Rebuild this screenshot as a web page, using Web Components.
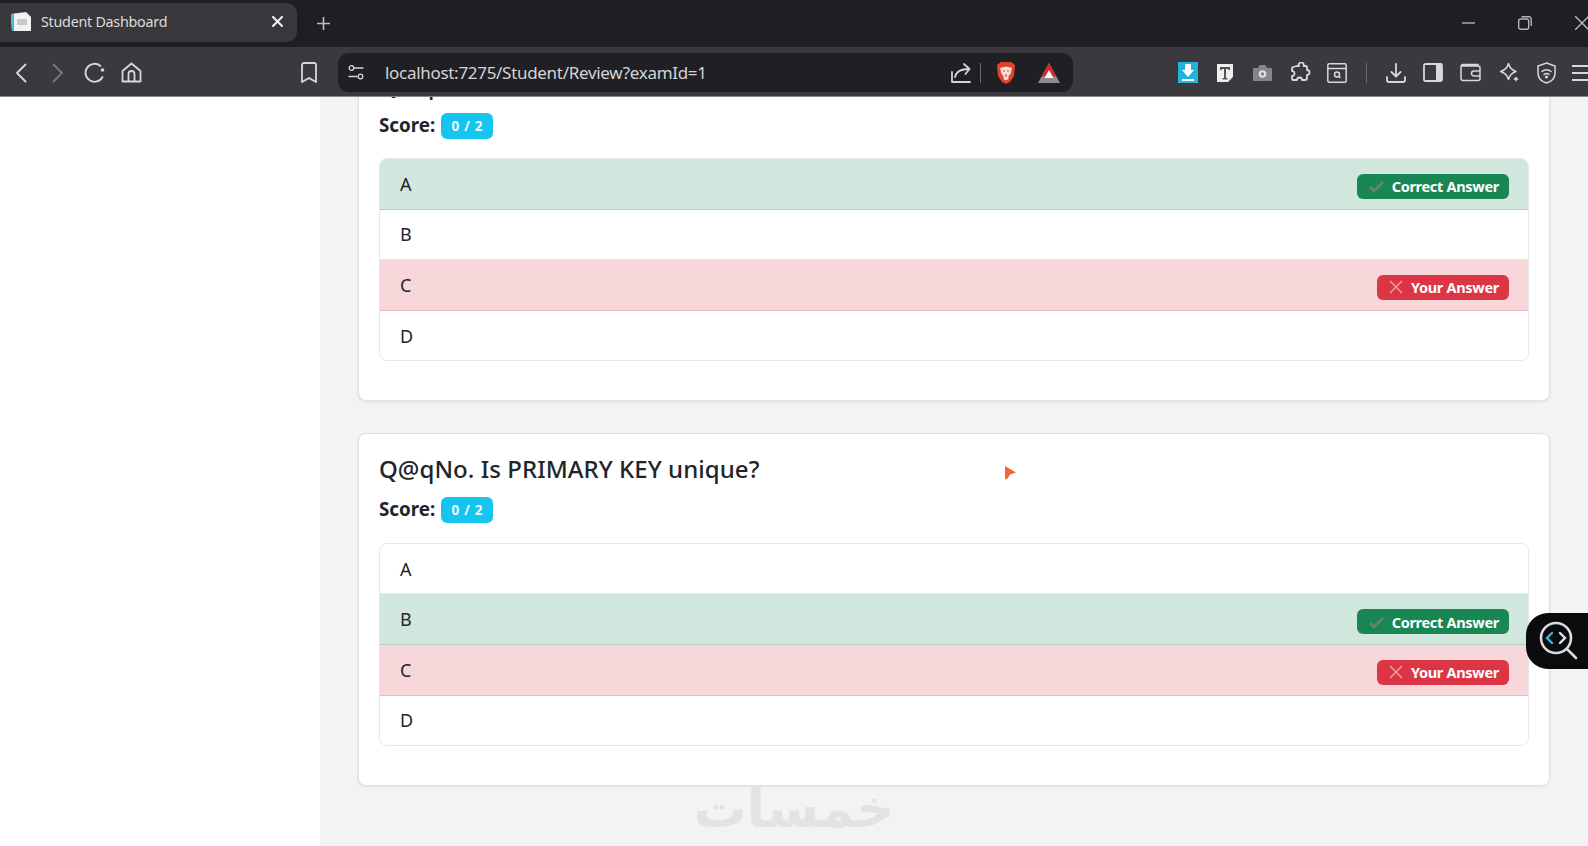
<!DOCTYPE html>
<html lang="en">
<head>
<meta charset="utf-8">
<title>Student Dashboard</title>
<style>
  html, body { margin: 0; height: 100%; overflow: hidden; background: #fff; }
  body { display: flex; flex-direction: column; font-family: "Noto Sans", "Open Sans", sans-serif; color: #212529; }
</style>
</head>
<body>
<browser-chrome url="localhost:7275/Student/Review?examId=1" tab-title="Student Dashboard"></browser-chrome>
<review-page>
  <exam-question score="0 / 2" title-text="Q@qNo.">
    <answer-option state="correct">A</answer-option>
    <answer-option>B</answer-option>
    <answer-option state="wrong">C</answer-option>
    <answer-option>D</answer-option>
  </exam-question>
  <exam-question score="0 / 2" title-text="Q@qNo. Is PRIMARY KEY unique?">
    <answer-option>A</answer-option>
    <answer-option state="correct">B</answer-option>
    <answer-option state="wrong">C</answer-option>
    <answer-option>D</answer-option>
  </exam-question>
</review-page>

<script>
// Icons of the browser toolbar, all on their own viewBox in real pixels
const line = 'fill="none" stroke="currentColor" stroke-width="1.8" stroke-linecap="round" stroke-linejoin="round"';
const ICONS = {
  favicon: `<svg width="22" height="21" viewBox="0 0 22 21"><path d="M1 3l15-2 5 5v14H2z" fill="#f2f2f2"/><path d="M1 3h3v17H2z" fill="#4db6d8"/><path d="M7 8h10v6H7z" fill="#c9c9c9"/></svg>`,
  close: `<svg width="11" height="11" viewBox="0 0 11 11"><path d="M1 1l9 9M10 1l-9 9" stroke="#f2f2f2" stroke-width="2" stroke-linecap="round"/></svg>`,
  plus: `<svg width="13" height="13" viewBox="0 0 13 13"><path d="M6.5 0v13M0 6.5h13" stroke="#bdbdbd" stroke-width="1.6"/></svg>`,
  back: `<svg width="12" height="20" viewBox="0 0 12 20" ${line}><path d="M10.5 1.5L2 10l8.5 8.5"/></svg>`,
  forward: `<svg width="12" height="20" viewBox="0 0 12 20" fill="none" stroke="#77777b" stroke-width="1.8" stroke-linecap="round" stroke-linejoin="round"><path d="M1.5 1.5L10 10l-8.500 8.500"/></svg>`,
  reload: `<svg width="22" height="21" viewBox="0 0 22 21" ${line}><path d="M18.500 15a9 9 0 1 1-2-11"/><circle cx="18.500" cy="8" r="1.800" fill="currentColor" stroke="none"/></svg>`,
  home: `<svg width="21" height="21" viewBox="0 0 21 21" ${line} stroke-width="1.600"><path d="M1.500 9L10.500 1.500 19.500 9v10.500h-18zM7.500 19.500V12a3 3 0 0 1 6 0v7.500"/></svg>`,
  bookmark: `<svg width="16" height="21" viewBox="0 0 16 21" ${line} stroke-width="1.600"><path d="M1 3a2 2 0 0 1 2-2h10a2 2 0 0 1 2 2v17l-7-4-7 4z"/></svg>`,
  sliders: `<svg width="16" height="15" viewBox="0 0 16 15" fill="none" stroke="currentColor" stroke-width="1.300"><circle cx="3.500" cy="3" r="2.300"/><path d="M6 3h9.500M.5 11.500H9.500"/><circle cx="12.500" cy="11.500" r="2.300"/></svg>`,
  share: `<svg width="20" height="20" viewBox="0 0 20 20" ${line} stroke-width="1.500"><path d="M1 9v10h18M4 14c1-5 5-8 14-8M13 1l5.500 5-4 5"/></svg>`,
  brave: `<svg width="20" height="24" viewBox="0 0 20 24"><path d="M5 1h10l4 3-1 11-4 6-4 2-4-2-4-6L1 4z" fill="#e0432d"/><path d="M4 7l6-1.500L16 7l-1.500 6-2 2v3L10 19.500 7.500 18v-3l-2-2z" fill="#f6dfd6"/><path d="M7 10h2M11 10h2M10 13v3" stroke="#e0432d" stroke-width="1.200"/></svg>`,
  triangle: `<svg width="22" height="20" viewBox="0 0 22 20"><path d="M11 0l11 20H0z" fill="#8c8c90"/><path d="M11 0l7.500 13.500H3.500z" fill="#cf2c2c"/><path d="M11 7l4.500 8h-9z" fill="#fff"/></svg>`,
  downloader: `<svg width="20" height="21" viewBox="0 0 20 21"><path d="M0 0h20v21H0z" fill="#22b4dd"/><path d="M7 2h6v6h3l-6 7-6-7h3zM4 17h12v2H4z" fill="#fff"/></svg>`,
  note: `<svg width="16" height="18" viewBox="0 0 16 18"><path d="M0 0h16v13l-5 5H0z" fill="#eee"/><path d="M3 3h10v3h-1.500l-.5-1H9v9h1.500v1.500h-5V14H7V5H5l-.5 1H3z" fill="#555"/></svg>`,
  camera: `<svg width="19" height="16" viewBox="0 0 19 16"><path d="M1 3h4l1.500-3h6L14 3h4a1 1 0 0 1 1 1v11a1 1 0 0 1-1 1H1a1 1 0 0 1-1-1V4a1 1 0 0 1 1-1z" fill="#85858a"/><circle cx="9.500" cy="9" r="3.800" fill="#e2e2e2"/><circle cx="9.500" cy="9" r="1.800" fill="#85858a"/></svg>`,
  puzzle: `<svg width="21" height="21" viewBox="0 0 21 21" ${line} stroke-width="1.500"><path d="M7 4h2a2.500 2.500 0 1 1 4.500 0H16a1 1 0 0 1 1 1v3a2.500 2.500 0 1 1 0 5v3a2 2 0 0 1-2 2h-3a2.500 2.500 0 0 0-5 0H3l-1-1v-3a2.500 2.500 0 1 0 0-5V6l1-1z"/></svg>`,
  capture: `<svg width="20" height="20" viewBox="0 0 20 20" fill="none" stroke="currentColor" stroke-width="1.500"><rect x=".8" y=".8" width="18.400" height="18.400" rx="1.500"/><path d="M1 5.500h18"/><circle cx="10" cy="11.500" r="2.500"/><path d="M12 13.500l1.500 1.500"/></svg>`,
  download: `<svg width="20" height="20" viewBox="0 0 20 20" ${line} stroke-width="1.500"><path d="M10 1v12M5.500 9l4.500 4.500L14.500 9M1 14v3a2 2 0 0 0 2 2h14a2 2 0 0 0 2-2v-3"/></svg>`,
  sidebar: `<svg width="20" height="19" viewBox="0 0 20 19"><rect x="1" y="1" width="18" height="17" rx="1.500" fill="none" stroke="currentColor" stroke-width="1.800"/><path d="M13 1h5a1 1 0 0 1 1 1v15a1 1 0 0 1-1 1h-5z" fill="currentColor"/></svg>`,
  wallet: `<svg width="21" height="19" viewBox="0 0 21 19" fill="none" stroke="currentColor" stroke-width="1.500"><path d="M18 3V1.500H3A2 2 0 0 0 1 3.500v12a2 2 0 0 0 2 2h15a2 2 0 0 0 2-2V5a2 2 0 0 0-2-2H2"/><path d="M20 8h-6a2 2 0 0 0 0 5h6"/></svg>`,
  stars: `<svg width="21" height="21" viewBox="0 0 21 21"><path d="M9.500 1.500c1 4 3 6.500 7.500 8-4.500 1.500-6.500 4-7.500 8-1-4-3-6.500-8-8 5-1.500 7-4 8-8z" fill="none" stroke="currentColor" stroke-width="1.500" stroke-linejoin="round"/><path d="M17 14l.9 2.100 2.100.9-2.100.9L17 20l-.9-2.100-2.100-.9 2.100-.9z" fill="currentColor"/></svg>`,
  shield: `<svg width="19" height="22" viewBox="0 0 19 22" fill="none" stroke="currentColor" stroke-width="1.500" stroke-linecap="round"><path d="M9.500 1L18 4v7c0 5-3.500 8.500-8.500 10C4.500 19.500 1 16 1 11V4z"/><path d="M5 9.500a6.500 6.500 0 0 1 9 0M7 12.500a3.500 3.500 0 0 1 5 0"/><circle cx="9.500" cy="15" r=".8" fill="currentColor"/></svg>`,
  menu: `<svg width="21" height="18" viewBox="0 0 21 18"><path d="M0 2h21M0 9h21M0 16h21" stroke="currentColor" stroke-width="1.800"/></svg>`,
  minimize: `<svg width="13" height="2" viewBox="0 0 13 2"><path d="M0 1h13" stroke="#a8a8a8" stroke-width="1.500"/></svg>`,
  restore: `<svg width="14" height="14" viewBox="0 0 14 14" fill="none" stroke="#b4b4b4" stroke-width="1.400"><rect x=".7" y="3" width="10" height="10.300" rx="2"/><path d="M3.500.8H11a2.200 2.200 0 0 1 2.200 2.200v7" /></svg>`,
  shut: `<svg width="18" height="14" viewBox="0 0 18 14"><path d="M0 0l14 14M14 0L0 14" stroke="#bdbdbd" stroke-width="1.300"/></svg>`
};

// Tab strip and toolbar of the browser around the page
class BrowserChrome extends HTMLElement {
  connectedCallback() {
    const root = this.attachShadow({ mode: "open" });
    const gap = (w) => `<span class="gap" style="width:${w}px"></span>`;
    root.innerHTML = `
    <style>
      :host { display: block; flex: none; font-family: "Noto Sans", sans-serif; color: #d8d8da; }
      .strip { height: 47px; box-sizing: border-box; background: #1f1f23; display: flex; align-items: flex-start; padding-top: 3px; overflow: hidden; }
      .tab { width: 297px; height: 39px; box-sizing: border-box; background: #38383c; border-radius: 0 10px 10px 0; display: flex; align-items: center; padding: 0 14px 2px 10px; font-size: 14.300px; color: #dcdcdc; }
      .tab span { margin-left: 9px; flex: 1; letter-spacing: -.25px; }
      .plus { margin: 14px 0 0 20px; line-height: 0; }
      .controls { margin-left: auto; margin-right: -5px; display: flex; align-items: center; height: 39px; line-height: 0; }
      .controls svg:nth-child(1) { margin-right: 43px; }
      .controls svg:nth-child(2) { margin-right: 43px; }
      .bar { height: 50px; box-sizing: border-box; background: #3a3a3e; border-bottom: 1px solid #85858a; display: flex; align-items: center; overflow: hidden; padding: 2px 0 0 15px; }
      .bar svg { flex: none; display: block; }
      .gap { flex: none; display: block; }
      .url { width: 735px; height: 39px; box-sizing: border-box; margin-left: 21px; background: #202024; border-radius: 11px; display: flex; align-items: center; padding: 0 13px 0 10px; font-size: 17px; color: #d4d4d6; flex: none; }
      .url .address { margin-left: 21px; flex: 1; letter-spacing: -.3px; }
      .sep { width: 1px; height: 20px; background: #6a6a6e; flex: none; }
      .tools { display: flex; align-items: center; flex: none; margin-left: 105px; }
    </style>
    <div class="strip">
      <div class="tab">${ICONS.favicon}<span>${this.getAttribute("tab-title")}</span>${ICONS.close}</div>
      <div class="plus">${ICONS.plus}</div>
      <div class="controls">${ICONS.minimize}${ICONS.restore}${ICONS.shut}</div>
    </div>
    <div class="bar">
      ${ICONS.back}${gap(25)}${ICONS.forward}${gap(20)}${ICONS.reload}${gap(15)}${ICONS.home}${gap(159)}${ICONS.bookmark}
      <div class="url">
        ${ICONS.sliders}<span class="address">${this.getAttribute("url")}</span>
        ${ICONS.share}<i class="sep" style="margin:0 15px 0 9px"></i>${ICONS.brave}${gap(22)}${ICONS.triangle}
      </div>
      <div class="tools">
        ${ICONS.downloader}${gap(19)}${ICONS.note}${gap(20)}${ICONS.camera}${gap(18)}${ICONS.puzzle}${gap(16)}${ICONS.capture}
        <i class="sep" style="margin:0 19px"></i>${ICONS.download}${gap(17)}${ICONS.sidebar}${gap(17)}${ICONS.wallet}${gap(18)}${ICONS.stars}${gap(17)}${ICONS.shield}${gap(16)}${ICONS.menu}
      </div>
    </div>`;
  }
}

// Empty sidebar plus the scrolled list of questions
class ReviewPage extends HTMLElement {
  constructor() {
    super();
    this.attachShadow({ mode: "open" }).innerHTML = `
    <style>
      :host { display: flex; flex: 1; min-height: 0; position: relative; overflow: hidden; }
      aside { width: 320px; flex: none; background: #fff; }
      main { flex: 1; background: #f2f3f5; padding: 0 38px; display: flex; flex-direction: column; gap: 32px; overflow: hidden; }
      /* the page is scrolled: the first card starts above the toolbar */
      ::slotted(exam-question:first-child) { margin-top: -48.500px; }
    </style>
    <aside></aside>
    <main>
      <slot></slot>
      <site-watermark></site-watermark>
    </main>
    <review-fab></review-fab>
    <orange-cursor></orange-cursor>`;
  }
}

// One question: title, score and its list of options
class ExamQuestion extends HTMLElement {
  constructor() {
    super();
    this.attachShadow({ mode: "open" });
  }

  connectedCallback() {
    this.shadowRoot.innerHTML = `
    <style>
      :host { display: block; flex: none; background: #fff; border: 1px solid #dfe2e5; border-radius: 8px; box-shadow: 0 1px 3px rgba(0,0,0,.08); padding: 19px 20px 39px; }
      h2 { margin: 0; font: 500 24px/32px "Noto Sans", sans-serif; letter-spacing: .05px; color: #212529; }
      .score { display: flex; align-items: center; gap: 6px; height: 26px; margin: 12px 0 19.500px; font-weight: 700; font-size: 18.800px; color: #212529; }
      .score span { margin-bottom: 2px; }
      .score b { background: #14c6ef; color: #e9fbff; border-radius: 6px; width: 52px; height: 26px; display: flex; align-items: center; justify-content: center; font: 700 13.500px "Noto Sans", sans-serif; letter-spacing: .7px; }
      .list { border: 1px solid #e6e8ea; border-radius: 8px; overflow: hidden; }
    </style>
    <h2>${this.getAttribute("title-text")}</h2>
    <div class="score"><span>Score:</span> <b>${this.getAttribute("score")}</b></div>
    <div class="list"><slot></slot></div>`;
  }
}

// A row of the list, coloured when it is the correct or the chosen answer
class AnswerOption extends HTMLElement {
  constructor() {
    super();
    this.attachShadow({ mode: "open" });
  }

  connectedCallback() {
    const state = this.getAttribute("state");
    const badge = state === "correct"
      ? `<span class="badge ok"><svg width="18" height="14" viewBox="0 0 18 14"><path d="M2 8l4 4 9-9" fill="none" stroke="#6c7f78" stroke-width="2.600"/></svg>Correct Answer</span>`
      : state === "wrong"
      ? `<span class="badge bad"><svg width="14" height="14" viewBox="0 0 14 14"><path d="M1 1l12 12M13 1L1 13" stroke="#f3a5ae" stroke-width="1.300"/></svg>Your Answer</span>`
      : "";
    this.shadowRoot.innerHTML = `
    <style>
      :host { display: flex; align-items: center; justify-content: space-between; box-sizing: border-box; height: 50.600px; padding: 0 19px 0 20px; font-size: 18px; color: #212529; background: #fff; border-bottom: 1px solid #e6e8ea; }
      :host(:last-child) { border-bottom: 0; height: 49.600px; }
      :host([state="correct"]) { background: #d1e7dd; border-bottom-color: #a9cfbf; }
      :host([state="wrong"]) { background: #f8d7da; border-bottom-color: #eab9bf; }
      .badge { display: flex; align-items: center; gap: 6px; height: 25px; margin-top: 5px; box-sizing: border-box; border-radius: 6px; padding: 0 10px 0 12px; font-size: 14.500px; font-weight: 700; color: #fff; letter-spacing: -.3px; }
      .ok { background: #198754; padding-left: 11px; }
      .bad { background: #dc3545; gap: 8px; }
    </style>
    <span><slot></slot></span>${badge}`;
  }
}

// Round black button on the right edge
class ReviewFab extends HTMLElement {
  constructor() {
    super();
    this.attachShadow({ mode: "open" }).innerHTML = `
    <style>
      :host { position: absolute; right: 0; top: 516px; width: 62px; height: 56px; background: #0b0b0d; border-radius: 22px 0 0 22px; display: flex; align-items: center; padding-left: 10px; box-sizing: border-box; }
    </style>
    <svg width="44" height="44" viewBox="0 0 44 44" fill="none" stroke-linecap="round">
      <circle cx="20" cy="19" r="15" stroke="#d9dcdc" stroke-width="2.600"/>
      <path d="M31 30l9 9" stroke="#d9dcdc" stroke-width="2.600"/>
      <path d="M16 14l-5 5 5 5" stroke="#38b6e8" stroke-width="2.400"/>
      <path d="M24 14l5 5-5 5" stroke="#e4e6e6" stroke-width="2.400"/>
    </svg>`;
  }
}

// Recording cursor left in the frame
class OrangeCursor extends HTMLElement {
  constructor() {
    super();
    this.attachShadow({ mode: "open" }).innerHTML = `
    <style>:host { position: absolute; left: 1004px; top: 368px; line-height: 0; }</style>
    <svg width="13" height="15" viewBox="0 0 13 15"><path d="M1 1l11 6.500L6 9.500l-3 5-2-1z" fill="#f0653a"/></svg>`;
  }
}

// Faint site name laid over the bottom of the page
class SiteWatermark extends HTMLElement {
  constructor() {
    super();
    this.attachShadow({ mode: "open" }).innerHTML = `
    <style>
      :host { position: absolute; left: 698px; top: 689px; width: 192px; height: 46px; display: flex; align-items: center; justify-content: center; font: 700 53px/46px "DejaVu Sans", sans-serif; color: #e1e3e4; }
    </style>
    <span lang="ar" dir="rtl">خمسات</span>`;
  }
}

customElements.define("browser-chrome", BrowserChrome);
customElements.define("review-page", ReviewPage);
customElements.define("exam-question", ExamQuestion);
customElements.define("answer-option", AnswerOption);
customElements.define("review-fab", ReviewFab);
customElements.define("orange-cursor", OrangeCursor);
customElements.define("site-watermark", SiteWatermark);
</script>
</body>
</html>
